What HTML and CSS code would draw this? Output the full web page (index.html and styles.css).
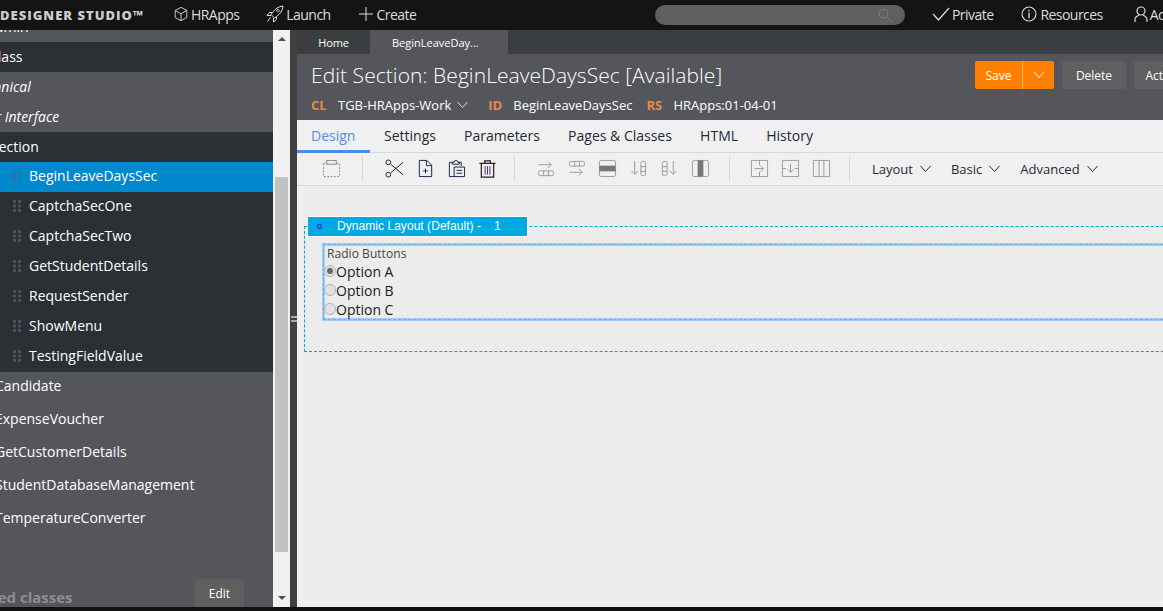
FILE: index.html
```html
<!DOCTYPE html>
<html lang="en">
<head>
<meta charset="utf-8">
<title>Edit Section</title>
<link rel="stylesheet" href="styles.css">
</head>
<body>
<svg class="defs" width="0" height="0" aria-hidden="true">
  <defs>
    <symbol id="chev" viewBox="0 0 12 8"><path d="M1 1l5 5.500L11 1" fill="none" stroke="currentColor" stroke-width="1"/></symbol>
    <symbol id="grip" viewBox="0 0 8 12"><path d="M0 0h3v3H0zM5 0h3v3H5zM0 4.500h3v3H0zM5 4.500h3v3H5zM0 9h3v3H0zM5 9h3v3H5z" fill="currentColor"/></symbol>
  </defs>
</svg>
<header class="topbar">
  <div class="brand">DESIGNER STUDIO™</div>
  <nav class="topnav">
    <a class="topitem"><svg class="ico16" viewBox="0 0 16 18"><path d="M8 1.500l6.500 3.500v8L8 16.500 1.500 13V5zM1.500 5L8 8.800 14.500 5M8 8.800v7.700" fill="none" stroke="currentColor"/></svg>HRApps</a>
    <a class="topitem"><svg class="ico18" viewBox="0 0 18 18"><path d="M17 1c-4.500.5-8 3-10.500 6.500L5 9.500l3.500 3.500 2-1.500C14 9 16.500 6 17 1zM6.500 7.500H3.500L1 10.500h4M10.500 11.500v3L7.500 17v-4M4.500 12.500L1.500 16.500M12 4.500a1.200 1.200 0 1 0 .1 0" fill="none" stroke="currentColor"/></svg>Launch</a>
    <a class="topitem plusitem"><svg class="ico14" viewBox="0 0 14 14"><path d="M7 0v14M0 7h14" fill="none" stroke="currentColor"/></svg>Create</a>
  </nav>
  <div class="search"><svg class="ico14" viewBox="0 0 14 14"><circle cx="5.500" cy="5.500" r="4.500" fill="none" stroke="currentColor"/><path d="M9 9l4.500 4.500" stroke="currentColor" fill="none"/></svg></div>
  <nav class="topright">
    <a class="topitem"><svg class="ico18w" viewBox="0 0 18 14"><path d="M1 7l5.500 6L17 1" fill="none" stroke="currentColor" stroke-width="1.200"/></svg>Private</a>
    <a class="topitem res"><svg class="ico16" viewBox="0 0 16 16"><circle cx="8" cy="8" r="7" fill="none" stroke="currentColor" stroke-width="1.100"/><path d="M8 3.800v1.700M8 6.800v5.400" stroke="currentColor" stroke-width="1.300" fill="none"/></svg>Resources</a>
    <a class="topitem acct"><svg class="ico14h" viewBox="0 0 14 16"><circle cx="7" cy="5" r="4" fill="none" stroke="currentColor" stroke-width="1.200"/><path d="M1 16v-2.500C1 11 3 10 5 9M13 16v-2.500C13 11 11 10 9 9" fill="none" stroke="currentColor" stroke-width="1.200"/></svg>Account</a>
  </nav>
</header>

<main class="shell">
  <aside class="sidebar">
    <div class="tree">
      <div class="row row-clip gray"><span class="clip-text">Admin</span></div>
      <div class="row dark">Class</div>
      <div class="row gray it">Technical</div>
      <div class="row gray it">User Interface</div>
      <div class="row dark sec">Section</div>
      <div class="row leaf selected"><svg class="grip"><use href="#grip"/></svg>BeginLeaveDaysSec</div>
      <div class="row leaf dark"><svg class="grip"><use href="#grip"/></svg>CaptchaSecOne</div>
      <div class="row leaf dark"><svg class="grip"><use href="#grip"/></svg>CaptchaSecTwo</div>
      <div class="row leaf dark"><svg class="grip"><use href="#grip"/></svg>GetStudentDetails</div>
      <div class="row leaf dark"><svg class="grip"><use href="#grip"/></svg>RequestSender</div>
      <div class="row leaf dark"><svg class="grip"><use href="#grip"/></svg>ShowMenu</div>
      <div class="row leaf dark"><svg class="grip"><use href="#grip"/></svg>TestingFieldValue</div>
      <div class="row2">Candidate</div>
      <div class="row2">ExpenseVoucher</div>
      <div class="row2">GetCustomerDetails</div>
      <div class="row2">StudentDatabaseManagement</div>
      <div class="row2">TemperatureConverter</div>
    </div>
    <div class="pinned">
      <span class="pinned-label">Pinned classes</span>
      <button class="edit">Edit</button>
    </div>
  </aside>
  <div class="scrollbar">
    <span class="arrow up"></span>
    <div class="thumbtrack"><div class="thumb"></div></div>
    <span class="arrow down"></span>
  </div>
  <div class="splitter"><span class="handle"></span></div>

  <section class="content">
    <div class="doctabs">
      <div class="doctab home">Home</div>
      <div class="doctab active">BeginLeaveDay...</div>
    </div>
    <div class="head">
      <div class="head-main">
        <h1 class="title">Edit Section: BeginLeaveDaysSec [Available]</h1>
        <div class="meta">
          <span class="key">CL</span><span class="val">TGB-HRApps-Work</span><svg class="chev-l"><use href="#chev"/></svg>
          <span class="key k2">ID</span><span class="val">BeginLeaveDaysSec</span>
          <span class="key k3">RS</span><span class="val">HRApps:01-04-01</span>
        </div>
      </div>
      <div class="actions">
        <div class="save"><span class="save-l">Save</span><span class="save-r"><svg class="chev-s"><use href="#chev"/></svg></span></div>
        <button class="btn del">Delete</button>
        <button class="btn act">Actions</button>
      </div>
    </div>
    <div class="tabs">
      <div class="tab on">Design</div>
      <div class="tab">Settings</div>
      <div class="tab">Parameters</div>
      <div class="tab">Pages &amp; Classes</div>
      <div class="tab">HTML</div>
      <div class="tab">History</div>
    </div>
    <div class="toolbar">
      <span class="tool t1"><svg viewBox="0 0 20 20"><path d="M1.500 4.500h17v14h-17z" fill="none" stroke="#888" stroke-dasharray="2 1.500"/><rect x="5" y="1.500" width="10" height="4" fill="#eee" stroke="#888"/></svg></span>
      <span class="sep s1"></span>
      <span class="tool t2"><svg viewBox="0 0 20 20"><path d="M6 5.500L19 16.500M6 14.500L19 3.500" stroke="#111" fill="none"/><circle cx="3.500" cy="3.500" r="2.500" fill="none" stroke="#123"/><circle cx="3.500" cy="16.500" r="2.500" fill="none" stroke="#123"/></svg></span>
      <span class="tool t3"><svg viewBox="0 0 20 20"><path d="M3.500 1.500h8l5 5v12h-13zM11 1.500v5.500h5.500" fill="none" stroke="#124"/><path d="M10 10v5M7.500 12.500h5" stroke="#124" fill="none"/></svg></span>
      <span class="tool t4"><svg viewBox="0 0 20 20"><path d="M6 3.500H2.500v15h5M12 3.500h3v4" fill="none" stroke="#124"/><path d="M5.500 5.500v-2h2a2 2 0 0 1 4 0h1.500v2z" fill="none" stroke="#124"/><path d="M7.500 8.500h11v10h-11zM10 12h6M10 15h6" fill="none" stroke="#124"/></svg></span>
      <span class="tool t5"><svg viewBox="0 0 20 20"><path d="M1.500 4.500h17M7 4.500V2h6v2.500M3.500 4.500v14.500h13V4.500" fill="none" stroke="#222" stroke-width="1.300"/><path d="M7.500 7.500v9M10 7.500v9M12.500 7.500v9" stroke="#53237a" fill="none"/></svg></span>
      <span class="sep s2"></span>
      <span class="tool g1"><svg viewBox="0 0 20 20"><path d="M3 6h13M12.500 2.500L16 6l-3.500 3.500" fill="none" stroke="#999"/><rect x="2.500" y="12.500" width="16" height="5" rx="2" fill="none" stroke="#999"/><path d="M8 12.500v5M13 12.500v5" stroke="#999"/></svg></span>
      <span class="tool g2"><svg viewBox="0 0 20 20"><rect x="2.500" y="2.500" width="16" height="5" rx="2" fill="none" stroke="#999"/><path d="M8 2.500v5M13 2.500v5M3 14h13M12.500 10.500L16 14l-3.500 3.500" fill="none" stroke="#999"/></svg></span>
      <span class="tool g3"><svg viewBox="0 0 20 20"><rect x="1.500" y="1.500" width="17" height="17" rx="2" fill="none" stroke="#999"/><rect x="1.500" y="7" width="17" height="6" fill="#777"/></svg></span>
      <span class="tool g4"><svg viewBox="0 0 20 20"><path d="M6 2v14M2.500 12.500L6 16l3.500-3.500" fill="none" stroke="#999"/><rect x="12.500" y="2.500" width="5" height="15" rx="2" fill="none" stroke="#999"/><path d="M12.500 8h5M12.500 13h5" stroke="#999"/></svg></span>
      <span class="tool g5"><svg viewBox="0 0 20 20"><rect x="2.500" y="2.500" width="5" height="15" rx="2" fill="none" stroke="#999"/><path d="M2.500 8h5M2.500 13h5M14 2v14M10.500 12.500L14 16l3.500-3.500" fill="none" stroke="#999"/></svg></span>
      <span class="tool g6"><svg viewBox="0 0 20 20"><rect x="1.500" y="1.500" width="17" height="17" rx="2" fill="none" stroke="#999"/><rect x="7" y="1.500" width="6" height="17" fill="#777"/></svg></span>
      <span class="sep s3"></span>
      <span class="tool h1"><svg viewBox="0 0 20 20"><path d="M1.500 1.500h17v17h-17zM10 1.500v5M10 13.500v5M5 10h9M11 7l3 3-3 3" fill="none" stroke="#999"/></svg></span>
      <span class="tool h2"><svg viewBox="0 0 20 20"><path d="M1.500 1.500h17v17h-17zM1.500 10h4M14.500 10h4M10 5v9M7 11l3 3 3-3" fill="none" stroke="#999"/></svg></span>
      <span class="tool h3"><svg viewBox="0 0 20 20"><path d="M1.500 1.500h17v17h-17zM7.500 1.500v17M12.500 1.500v17" fill="none" stroke="#999"/></svg></span>
      <span class="sep s4"></span>
      <span class="menu m1">Layout<svg class="chev-m"><use href="#chev"/></svg></span>
      <span class="menu">Basic<svg class="chev-m"><use href="#chev"/></svg></span>
      <span class="menu">Advanced<svg class="chev-m"><use href="#chev"/></svg></span>
    </div>
    <div class="canvas-wrap">
      <div class="canvas">
        <div class="dyn">
          <div class="dyn-tag"><span class="dot"></span><span class="dyn-name">Dynamic Layout (Default) -</span><span class="dyn-num">1</span></div>
          <div class="field">
            <div class="field-label">Radio Buttons</div>
            <div class="radio"><span class="rb rb-on"></span>Option A</div>
            <div class="radio"><span class="rb"></span>Option B</div>
            <div class="radio"><span class="rb"></span>Option C</div>
          </div>
        </div>
      </div>
    </div>
  </section>
</main>
<div class="foot"></div>
</body>
</html>
```
FILE: styles.css
```css
* { box-sizing: border-box; }
html, body { margin: 0; height: 100%; overflow: hidden; }
body { width: 1163px; height: 611px; font-family: "Open Sans", sans-serif; background: #111; color: #fff; display: flex; flex-direction: column; }
.defs { position: absolute; }
svg { display: block; flex: none; }

.topbar { height: 30px; background: #141414; display: flex; align-items: center; flex: none; white-space: nowrap; font-size: 14px; color: #ddd; overflow: hidden; }
.brand { font-weight: 800; font-size: 13px; letter-spacing: 1px; color: #ccc; width: 173px; flex: none; padding-bottom: 1px; }
.topnav { display: flex; width: 482px; flex: none; }
.topitem { display: flex; align-items: center; gap: 2px; letter-spacing: -.55px; padding-bottom: 2px; }
.topnav .topitem { margin-right: 27px; }
.topnav .plusitem { margin-left: 1px; gap: 4px; }
.ico18 { width: 18px; height: 18px; }
.ico18w { width: 18px; height: 14px; }
.ico14 { width: 14px; height: 14px; }
.ico16 { width: 16px; height: 16px; }
.ico14h { width: 14px; height: 16px; }
.search { width: 250px; height: 20px; border-radius: 10px; background: #5f5f5f; color: #828282; display: flex; justify-content: flex-end; align-items: center; padding-right: 13px; flex: none; }
.topright { display: flex; margin-left: 27px; gap: 28px; }
.res { gap: 3px; }
.acct { margin-left: 3px; gap: 2px; }

.shell { flex: 1; display: flex; min-height: 0; }
.sidebar { width: 273px; background: #54565b; flex: none; position: relative; overflow: hidden; font-size: 14px; }
.tree { margin-left: -11px; }
.row { height: 30px; line-height: 30px; white-space: nowrap; }
.row-clip { height: 12px; overflow: hidden; text-indent: -3px; }
.clip-text { display: block; margin-top: -18px; }
.gray { background: #54565b; }
.dark { background: #2a3034; }
.it { font-style: italic; text-indent: -16px; }
.sec { text-indent: 2px; }
.leaf { display: flex; align-items: center; padding-left: 24px; padding-bottom: 2px; }
.selected { background: #0088cc; }
.grip { width: 8px; height: 12px; color: #4b5257; margin-right: 8px; }
.selected .grip { color: #2c6f9a; }
.row2 { height: 33px; line-height: 28px; white-space: nowrap; text-indent: 6px; }
.pinned { position: absolute; left: 0; right: 0; bottom: 0; height: 30px; }
.pinned-label { position: absolute; left: -36px; top: 10px; font-size: 15px; font-weight: 700; color: #8d8f93; white-space: nowrap; }
.edit { position: absolute; left: 195px; top: 2px; width: 49px; height: 28px; border: 0; border-radius: 2px 2px 0 0; background: #5f5f5f; color: #fff; font: 12px "Open Sans", sans-serif; }

.scrollbar { width: 17px; background: #f1f1f1; flex: none; display: flex; flex-direction: column; align-items: center; }
.arrow { width: 0; height: 0; border-left: 4px solid transparent; border-right: 4px solid transparent; flex: none; }
.arrow.up { border-bottom: 4px solid #505050; margin-top: 7px; }
.arrow.down { border-top: 4px solid #505050; margin-bottom: 7px; }
.thumbtrack { flex: 1; width: 100%; padding: 136px 2px 44px; }
.thumb { background: #c1c1c1; height: 100%; width: 13px; }
.splitter { width: 7px; background: #404040; flex: none; display: flex; align-items: center; justify-content: center; }
.handle { width: 6px; height: 6px; border-top: 2px solid #a8a8a8; border-bottom: 2px solid #a8a8a8; }

.content { flex: 1; min-width: 0; display: flex; flex-direction: column; background: #f0f0f0; overflow: hidden; }
.doctabs { height: 24px; background: #3b3e41; display: flex; flex: none; font-size: 11px; }
.doctab { display: flex; align-items: center; }
.home { width: 73px; justify-content: center; letter-spacing: -.1px; }
.active { width: 138px; padding-left: 22px; background: #54565b; }
.head { height: 66px; background: #54565b; display: flex; justify-content: space-between; flex: none; padding-left: 14px; }
.title { margin: 7px 0 0; font-size: 21px; line-height: 28px; font-weight: 300; color: #fff; white-space: nowrap; letter-spacing: .06px; }
.meta { display: flex; align-items: center; height: 20px; margin-top: 6px; font-size: 13px; white-space: nowrap; }
.key { color: #e8894c; font-weight: 700; font-size: 13px; width: 27px; }
.k2 { margin-left: 19px; width: 25px; }
.k3 { margin-left: 14px; width: 27px; }
.chev-l { width: 13px; height: 8px; margin-left: 5px; color: #ddd; }
.actions { display: flex; gap: 8px; padding-top: 7px; margin-right: -35px; flex: none; }
.save { display: flex; width: 79px; height: 28px; background: #ff8000; border-radius: 2px; font-size: 12px; }
.save-l { width: 48px; display: flex; align-items: center; justify-content: center; border-right: 1px solid #ffb366; }
.save-r { flex: 1; display: flex; align-items: center; justify-content: center; }
.chev-s { width: 12px; height: 8px; }
.btn { height: 28px; border: 0; border-radius: 2px; background: #5f5f5f; color: #fff; font: 12px "Open Sans", sans-serif; }
.del { width: 64px; }
.act { width: 64px; text-align: center; }

.tabs { height: 33px; display: flex; flex: none; background: #f0f0f0; border-bottom: 1px solid #d8d8d8; color: #1d2a36; font-size: 14px; }
.tab { margin-right: 28.2px; line-height: 31px; white-space: nowrap; }
.tab.on { width: 73px; margin-right: 14px; padding-left: 14px; color: #5a8de0; height: 33px; border-bottom: 3px solid #4f8be5; }
.toolbar { height: 33px; display: flex; align-items: center; flex: none; background: #f0f0f0; border-bottom: 1px solid #d8d8d8; font-size: 13px; color: #1d2a36; padding-bottom: 1px; }
.tool { width: 19px; height: 19px; flex: none; }
.tool svg { width: 100%; height: 100%; }
.sep { width: 1px; height: 26px; background: #d8d8d8; flex: none; }
.t1 { margin-left: 25px; }
.s1 { margin-left: 21px; }
.t2 { margin-left: 22px; }
.t3, .t4, .t5 { margin-left: 12px; }
.s2 { margin-left: 17px; }
.g1 { margin-left: 21px; }
.g2, .g3, .g4, .g5, .g6 { margin-left: 12px; }
.s3 { margin-left: 19px; }
.h1 { margin-left: 20px; }
.h2, .h3 { margin-left: 12px; }
.s4 { margin-left: 18px; }
.menu { display: flex; align-items: center; gap: 6px; margin-left: 19px; white-space: nowrap; }
.m1 { margin-left: 22px; }
.chev-m { width: 13px; height: 8px; }

.canvas-wrap { flex: 1; padding: 0 0 7px 7px; min-height: 0; }
.canvas { height: 100%; background: #ececec; padding-top: 40px; }
.dyn { width: 900px; height: 126px; border: 1px dashed #00a6e0; border-right: 0; position: relative; padding: 16px 0 0 17px; }
.dyn-tag { position: absolute; left: 2px; top: -11px; width: 221px; height: 21px; background: #00a9e0; border: 1px solid #fff; display: flex; align-items: center; font: 12px "Liberation Sans", sans-serif; color: #fff; padding-bottom: 1px; }
.dot { width: 5px; height: 5px; border: 1px solid #1010d0; border-radius: 50%; margin-left: 9px; flex: none; }
.dyn-name { margin-left: 15px; letter-spacing: .05px; }
.dyn-num { margin-left: 13px; }
.field { height: 78px; border: 3px solid #a0cbf7; border-right: 0; outline: 1px dashed #6db3f2; outline-offset: -2px; color: #222; padding: 0 0 0 2px; }
.field-label { font-size: 12px; line-height: 15px; color: #444; letter-spacing: .05px; }
.radio { display: flex; font-size: 14px; line-height: 19px; height: 19px; color: #1b1b1b; margin-left: -3px; }
.field-label + .radio { margin-top: 1px; }
.rb { width: 12px; height: 12px; border-radius: 50%; background: #e2e2e2; border: 1px solid #b0b0b0; flex: none; position: relative; margin-top: 3px; }
.rb-on::after { content: ""; position: absolute; left: 2px; top: 2px; width: 6px; height: 6px; border-radius: 50%; background: #666; }
.foot { height: 4px; background: #111; flex: none; }
```
